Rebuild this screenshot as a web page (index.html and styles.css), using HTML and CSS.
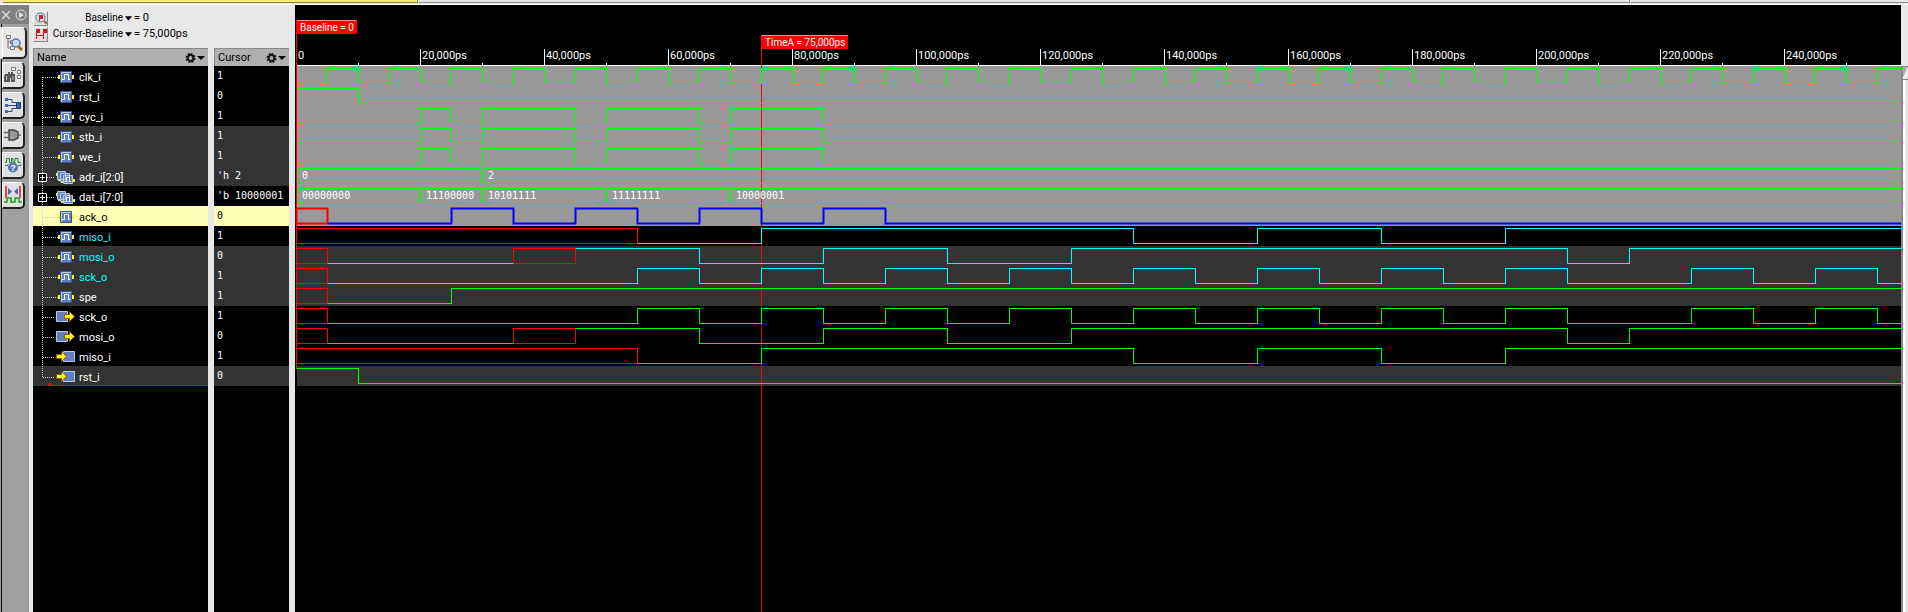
FILE: index.html
```html
<!DOCTYPE html>
<html lang="en">
<head>
<meta charset="utf-8">
<title>Waveform</title>
<link rel="stylesheet" href="styles.css">
</head>
<body>
<svg class="defs" aria-hidden="true">
  <symbol id="signal" viewBox="0 0 20 16"><path fill="#ff0" d="M2 6h2v4H2zM16 6h2v4h-2z"/><path fill="#6480bc" stroke="#3c5890" d="M4.5 2.500h11v11h-11z"/><path fill="none" stroke="#b8c8e8" d="M5.500 13V3.500H15"/><path fill="none" stroke="#fff" d="M6 10.500h2.500v-5h4v5H14"/></symbol>
  <symbol id="bus" viewBox="0 0 20 16"><path fill="#ff0" d="M0 4h2v3H0zM2 9h3v3H2zM5 11h3v3H5zM17 10h2v3h-2z"/><path fill="#6480bc" stroke="#b8c8e8" d="M1.500 2.500h8v8h-8zM4.500 4.500h9v8h-9zM7.500 6.500h9v8h-9z"/><path fill="none" stroke="#fff" d="M9 12.500h1.500v-4h3v4H15"/></symbol>
  <symbol id="out" viewBox="0 0 20 16"><path fill="#6480bc" stroke="#b8c8e8" d="M.500 2.500h11v10H.500z"/><path fill="#ff0" stroke="#a05010" d="M8.500 5.500h5v-3l5 5-5 5v-3h-5z"/></symbol>
  <symbol id="in" viewBox="0 0 20 16"><path fill="#6480bc" stroke="#b8c8e8" d="M7.500 2.500h11v10h-11z"/><path fill="#ff0" stroke="#a05010" d="M.500 5.500h5v-3l5 5-5 5v-3h-5z"/></symbol>
  <symbol id="gear" viewBox="0 0 20 12"><path fill="none" stroke="#111" stroke-width="2" stroke-dasharray="2 1.100" d="M5.500 2a4 4 0 1 1 0 8a4 4 0 1 1 0-8"/><circle cx="5.500" cy="6" r="2.800" fill="none" stroke="#111" stroke-width="1.800"/><path fill="#000" d="M12 4h8l-4 4z"/></symbol>
</svg>
<div class="app">
  <header class="tabstrip"><div class="tab-active"></div><div class="tab-rest"></div><div class="tab-last"></div></header>
  <main class="body">
    <nav class="rail">
      <div class="rail-head">
        <button aria-label="Close"><svg width="8" height="10" viewBox="0 0 8 10"><path stroke="#ddd" stroke-width="1.300" d="M0 1l8 8M8 1L0 9"/></svg></button>
        <button aria-label="Expand"><svg width="12" height="12" viewBox="0 0 12 12"><circle cx="6" cy="6" r="5" fill="none" stroke="#ddd"/><path fill="#ddd" d="M4 3l5 3-5 3z"/></svg></button>
      </div>
      <button class="rail-tab rail-tab-on" aria-label="Design browser"><svg width="18" height="18" viewBox="0 0 18 18"><g fill="#f4f4f4" stroke="#777"><path d="M1.500 1.500h4v3h-4zM5.500 6.500h4v3h-4zM5.500 12.500h4v3h-4z"/><path fill="none" d="M3 5v9h2M3 8h2"/></g><circle cx="11" cy="9" r="4" fill="#c8daf0" stroke="#5878a8" stroke-width="1.500"/><path stroke="#b06010" stroke-width="3" d="M13.500 12.500L17 16"/></svg></button>
      <button class="rail-tab" aria-label="Search"><svg width="18" height="18" viewBox="0 0 18 18"><path fill="#555" d="M1 8h3v-2h2v2h1v-2h2v2h2v8H7v-4H6v4H0v-6z"/><path stroke="#bbb" d="M2.500 10v4M9 10v4"/><path fill="#fff" stroke="#777" d="M7.500 1.500h4v3h-4zM13.500 4.500h3v3h-3zM13.500 9.500h3v3h-3z"/></svg></button>
      <button class="rail-tab" aria-label="Trace drivers"><svg width="18" height="18" viewBox="0 0 18 18"><path fill="#4068b0" stroke="#203868" d="M12.500 6.500h4v6h-4z"/><path fill="none" stroke="#304878" d="M4 3.500h4v3h4M2 9.500h10M4 15.500h4v-3h4"/><path fill="#4068b0" d="M1 2h3v3H1zM1 8h3v3H1zM1 14h3v3H1z"/></svg></button>
      <button class="rail-tab" aria-label="Schematic"><svg width="18" height="18" viewBox="0 0 18 18"><path fill="#999" stroke="#444" stroke-width="1.500" d="M5 4h5l4 2v6l-4 2H5z"/><path fill="none" stroke="#666" stroke-width="1.500" d="M0 6.500h5M0 11.500h5M14 9h3"/></svg></button>
      <button class="rail-tab" aria-label="Help waves"><svg width="18" height="18" viewBox="0 0 18 18"><path fill="none" stroke="#288038" d="M1 6.500h1.500v-4h3v4h2v-4H9v4h2v-4h3v4h3M1 9.500h3v-1M14 9.500h3v-1"/><circle cx="9" cy="11.500" r="5" fill="#5878b0"/><text x="9" y="15" class="q">?</text></svg></button>
      <button class="rail-tab" aria-label="Compare waves"><svg width="18" height="18" viewBox="0 0 18 18"><path stroke="#e01818" stroke-width="1.500" d="M2 0v12M16 0v12"/><path fill="#4068b0" d="M4 2l4 3.500L4 9zM14 2l-4 3.500L14 9z"/><path fill="none" stroke="#10a020" stroke-width="1.500" d="M0 16h3v-4h4v4h4v-4h4v4h3"/></svg></button>
    </nav>
    <section class="signals">
      <div class="info">
        <div class="info-row"><button class="tool" aria-label="Zoom to baseline"><svg width="12" height="12" viewBox="0 0 12 12"><circle cx="5.500" cy="5.500" r="4.500" fill="#d8e4f4" stroke="#5070a0"/><path fill="#d02020" d="M4 3h4v4H5v2H4z"/><path stroke="#b06010" stroke-width="2" d="M9 9l3 3"/></svg></button><span class="info-name">Baseline</span><svg class="caret" viewBox="0 0 8 5"><path d="M0 0h8L4 5z"/></svg><span>= 0</span></div>
        <div class="info-row"><button class="tool" aria-label="Cursor to baseline"><svg width="12" height="12" viewBox="0 0 12 12"><path fill="#c02020" d="M1 1h4v4H2v6H1zM8 1h4v4H9v6H8z"/><path stroke="#c02020" d="M1 7.500h7"/></svg></button><span class="info-name">Cursor-Baseline</span><svg class="caret" viewBox="0 0 8 5"><path d="M0 0h8L4 5z"/></svg><span>= 75,000ps</span></div>
      </div>
      <div class="columns">
        <div class="column column-name">
          <div class="column-head"><span>Name</span><button aria-label="Name options"><svg width="20" height="12"><use href="#gear"/></svg></button></div>
          <ul class="rows" id="names"></ul>
          <svg class="insert" height="5"><path d="M0 4l3-4 3 4z"/><path d="M0 3h400v1H0z"/></svg>
        </div>
        <div class="column column-cursor">
          <div class="column-head"><span>Cursor</span><button aria-label="Cursor options"><svg width="20" height="12"><use href="#gear"/></svg></button></div>
          <ul class="rows" id="values"></ul>
        </div>
      </div>
    </section>
    <section class="waves">
      <svg class="ruler" id="ruler"></svg>
      <div class="traces" id="traces"></div>
      <div class="baseline"><span class="flag">Baseline = 0</span></div>
      <div class="cursor"><span class="flag">TimeA = 75,000ps</span></div>
    </section>
    <div class="scroll"><div class="scroll-track"><button aria-label="Scroll up"><svg width="5" height="12" viewBox="0 0 5 12"><path fill="#e8e8e8" d="M0 11L5 0v11z"/><path stroke="#fff" d="M0 11L5 0"/><path fill="#808080" d="M0 11h5v1H0z"/></svg></button></div></div>
  </main>
</div>
<script src="script.js"></script>
</body>
</html>
```
FILE: styles.css
```css
* { box-sizing: border-box; }
body { margin: 0; background: #e8e8e8; font: 11px/16px "Roboto", "Liberation Sans", sans-serif; color: #000; }
button { margin: 0; padding: 0; border: 0; background: none; font: inherit; display: flex; align-items: center; justify-content: center; }
svg { display: block; flex: none; }
ul { margin: 0; padding: 0; list-style: none; }
.defs { position: absolute; width: 0; height: 0; }
.app { display: flex; flex-direction: column; min-height: 100vh; }
.tabstrip { display: flex; height: 5px; gap: 1px; padding-left: 3px; border-bottom: 1px solid #fff; }
.tab-active { width: 415px; height: 3px; background: #f4ec70; border-bottom: 1px solid #8c8640; border-right: 1px solid #8c8640; }
.tab-rest { flex: 4.360; height: 3px; border-bottom: 1px solid #888; border-right: 1px solid #888; }
.tab-last { flex: 1; height: 3px; border-bottom: 1px solid #888; }
.body { display: flex; flex: 1; }

.rail { width: 29px; background: linear-gradient(90deg, #a0a0a0 1px, #000 1px, #000 2px, #a0a0a0 2px); display: flex; flex-direction: column; align-items: flex-start; gap: 3px; padding-left: 2px; }
.rail-head { display: flex; align-items: center; gap: 5px; height: 19px; width: 27px; background: #808080; box-shadow: -2px 0 #808080; }
.rail-tab { width: 23px; height: 27px; background: #e0e0e0; border: 1px solid #fff; border-right: 2px solid #222; border-bottom: 2px solid #222; border-radius: 0 5px 5px 0; }
.rail-tab-on { width: 25px; height: 32px; background: #e8e8e8; box-shadow: -2px 0 #e8e8e8; }
.q { font: bold 9px "Liberation Sans", sans-serif; fill: #fff; text-anchor: middle; }

.signals { display: flex; flex-direction: column; width: 266px; padding: 0 6px 0 4px; }
.info { height: 43px; padding-top: 5px; }
.info-row { display: flex; align-items: center; height: 16px; white-space: nowrap; }
.tool { width: 15px; height: 15px; border: 1px solid #fff; border-right-color: #888; border-bottom-color: #888; background: #dcdcdc; }
.info-name { width: 75px; text-align: right; font-size: 10px; }
.caret { width: 7px; height: 5px; margin: 0 2px; }
.columns { flex: 1; display: flex; gap: 6px; }
.column { position: relative; background: #000; color: #fff; }
.column-name { width: 175px; }
.column-cursor { width: 75px; }
.column-head { display: flex; justify-content: space-between; align-items: center; height: 18px; padding: 0 3px; background: #b0b0b0; color: #000; border-top: 1px solid #888; border-left: 1px solid #888; }
.row { display: flex; height: 20px; padding-top: 4px; }
.row svg { margin-top: -4px; }
.row .expand svg { margin-top: 0; }
.column-cursor .row { padding: 2px 0 0 3px; font: 10px/16px "DejaVu Sans Mono", monospace; white-space: pre; }
.tree { position: relative; width: 46px; }
.expand { position: absolute; left: 5px; top: 3px; width: 9px; height: 9px; background: #000; }
.band-dark { background: #000; }
.band-gray { background: #333; }
.band-picked { background: #ffffb8; color: #000; }
.name-cyan { color: #0ff; }
.insert { position: absolute; left: 14px; top: 334px; width: 161px; fill: #f00; overflow: hidden; }

.waves { flex: 1; min-width: 0; position: relative; background: #000; overflow: hidden; }
.ruler { width: 100%; height: 61px; font-size: 11px; fill: #fff; }
.traces { position: relative; z-index: 1; }
.trace { width: 100%; height: 20px; fill: none; font: 10px "DejaVu Sans Mono", monospace; }
.trace text { fill: #fff; }
.s-green { stroke: #0f0; }
.s-cyan { stroke: #0ff; }
.s-blue { stroke: #00f; stroke-width: 2; }
.s-red { stroke: #f00; }
.s-thick { stroke: #f00; stroke-width: 2; }
.baseline, .cursor { position: absolute; border-left: 1px solid #f00; }
.baseline { z-index: 2; left: 1px; top: 15px; height: 349px; }
.cursor { left: 466px; top: 30px; bottom: 0; border-left-color: #e01010; }
.flag { display: block; height: 14px; padding: 0 3px; background: #f00; color: #fff; border-top: 1px solid #f88; font-size: 10px; line-height: 13px; white-space: nowrap; }

.scroll { width: 7px; padding-top: 61px; display: flex; }
.scroll-track { flex: 1; border-left: 2px solid #888; background: #e8e8e8; box-shadow: inset 2px 0 #fff; }
.scroll-track button { width: 5px; height: 14px; background: #b0b0b0; border-top: 1px solid #888; }
```
FILE: script.js
```js
const PX_PER_NS = 6.2;
const ORIGIN = 1;
const clock = Array.from({ length: 120 }, (_, i) => [i * 5, i % 2]);
const strobe = [[0, 0], [20, 1], [25, 0], [30, 1], [45, 0], [50, 1], [65, 0], [70, 1], [85, 0]];
const miso = [[0, 'x'], [55, 0], [75, 1], [135, 0], [155, 1], [175, 0], [195, 1]];
const mosi = [[0, 'x'], [5, 0], [35, 'x'], [45, 1], [65, 0], [85, 1], [105, 0], [125, 1], [205, 0], [215, 1]];
const sck = [[0, 'x'], [5, 0], [55, 1], [65, 0], [75, 1], [85, 0], [95, 1], [105, 0], [115, 1], [125, 0], [135, 1], [145, 0], [155, 1], [165, 0], [175, 1], [185, 0], [195, 1], [205, 0], [225, 1], [235, 0], [245, 1], [255, 0]];
const reset = [[0, 1], [10, 0]];

const signals = [
  { name: 'clk_i', value: '1', band: 'dark', wave: clock, back: '#999' },
  { name: 'rst_i', value: '0', band: 'dark', wave: reset, back: '#999' },
  { name: 'cyc_i', value: '1', band: 'dark', wave: strobe, back: '#999' },
  { name: 'stb_i', value: '1', band: 'gray', wave: strobe, back: '#999' },
  { name: 'we_i', value: '1', band: 'gray', wave: strobe, back: '#999' },
  { name: 'adr_i[2:0]', value: "'h 2", band: 'gray', icon: 'bus', bus: [[0, '0'], [30, '2']], back: '#999' },
  { name: 'dat_i[7:0]', value: "'b 10000001", band: 'dark', icon: 'bus', bus: [[0, '00000000'], [20, '11100000'], [30, '10101111'], [50, '11111111'], [70, '10000001']], back: '#999' },
  { name: 'ack_o', value: '0', band: 'picked', color: 'blue', wave: [[0, 'x'], [5, 0], [25, 1], [35, 0], [45, 1], [55, 0], [65, 1], [75, 0], [85, 1], [95, 0]], back: '#999' },
  { name: 'miso_i', value: '1', band: 'dark', color: 'cyan', wave: miso },
  { name: 'mosi_o', value: '0', band: 'gray', color: 'cyan', wave: mosi },
  { name: 'sck_o', value: '1', band: 'gray', color: 'cyan', wave: sck },
  { name: 'spe', value: '1', band: 'gray', wave: [[0, 'x'], [5, 0], [25, 1]] },
  { name: 'sck_o', value: '1', band: 'dark', icon: 'out', wave: sck },
  { name: 'mosi_o', value: '0', band: 'dark', icon: 'out', wave: mosi },
  { name: 'miso_i', value: '1', band: 'dark', icon: 'in', wave: miso },
  { name: 'rst_i', value: '0', band: 'gray', icon: 'in', wave: reset }
];

const xAt = ns => ORIGIN + Math.floor(ns * PX_PER_NS + 0.01) + 0.5;

function tree(s, i) {
  const last = i === signals.length - 1;
  const icon = s.icon || 'signal';
  const stem = `<path fill="none" stroke="#ccc" stroke-dasharray="1 1" d="M9.5 ${i ? 0 : 11}V${last ? 11 : 20}M10 11.5H${icon === 'signal' ? 25 : 22}"/>`;
  const plus = icon === 'bus'
    ? `<button class="expand" aria-label="Expand ${s.name}"><svg width="9" height="9"><path fill="none" stroke="#fff" d="M.5 .5h8v8h-8zM2 4.5h5M4.5 2v5"/></svg></button>` : '';
  return `<div class="tree"><svg width="46" height="20">${stem}<use href="#${icon}" x="23" y="3" width="20" height="16"/></svg>${plus}</div>`;
}

function level(s, end) {
  let out = '', prev = null;
  const style = s.color || 'green';
  s.wave.forEach(([t, v], i) => {
    const a = xAt(t);
    if (a > end) return;
    const b = i + 1 < s.wave.length ? Math.min(xAt(s.wave[i + 1][0]), end) : end;
    const y = v === 1 ? 2.5 : 17.5;
    if (v === 'x') {
      out += `<path class="${style === 'blue' ? 's-thick' : 's-red'}" d="M${a} 2.5H${b}V17.5H${a}z"/>`;
    } else {
      const edge = prev === 0 || prev === 1 ? `M${a} ${20 - y}V${y}H${b + 0.5}` : `M${a} ${y}H${b + 0.5}`;
      out += `<path class="s-${style}" d="${edge}"/>`;
    }
    prev = v;
  });
  return out;
}

function bus(s, end) {
  return s.bus.map(([t, label], i) => {
    const a = xAt(t);
    const b = i + 1 < s.bus.length ? xAt(s.bus[i + 1][0]) : end + 9;
    return `<path class="s-green" d="M${a} 10L${a + 2} 2.5H${b - 2}L${b} 10L${b - 2} 17.5H${a + 2}z"/><text x="${a + 5.5}" y="13">${label}</text>`;
  }).join('');
}

function draw() {
  const width = document.querySelector('.waves').clientWidth;
  let ruler = `<path stroke="#fff" d="M2 60.5H${width}"/>`;
  for (let t = 0; xAt(t) < width; t += 10) {
    const x = xAt(t), major = t % 20 === 0;
    if (t) ruler += `<path stroke="#fff" d="M${x} ${major ? 44 : 58}V60"/>`;
    if (major) ruler += `<text x="${x + 1.5}" y="54">${t ? t + ',000ps' : '0'}</text>`;
  }
  document.getElementById('ruler').innerHTML = ruler;
  document.getElementById('traces').innerHTML = signals.map(s => {
    const back = s.back || (s.band === 'gray' ? '#333' : '#000');
    const cursor = xAt(75);
    return `<svg class="trace"><rect x="2" width="${width}" height="20" fill="${back}"/><path stroke="#e01010" d="M${cursor} 0V20"/>${s.bus ? bus(s, width) : level(s, width)}</svg>`;
  }).join('');
}

document.getElementById('names').innerHTML = signals.map((s, i) =>
  `<li class="row band-${s.band}">${tree(s, i)}<span class="name-${s.color || 'plain'}">${s.name}</span></li>`).join('');
document.getElementById('values').innerHTML = signals.map(s =>
  `<li class="row band-${s.band}">${s.value}</li>`).join('');
draw();
window.addEventListener('resize', draw);
```
